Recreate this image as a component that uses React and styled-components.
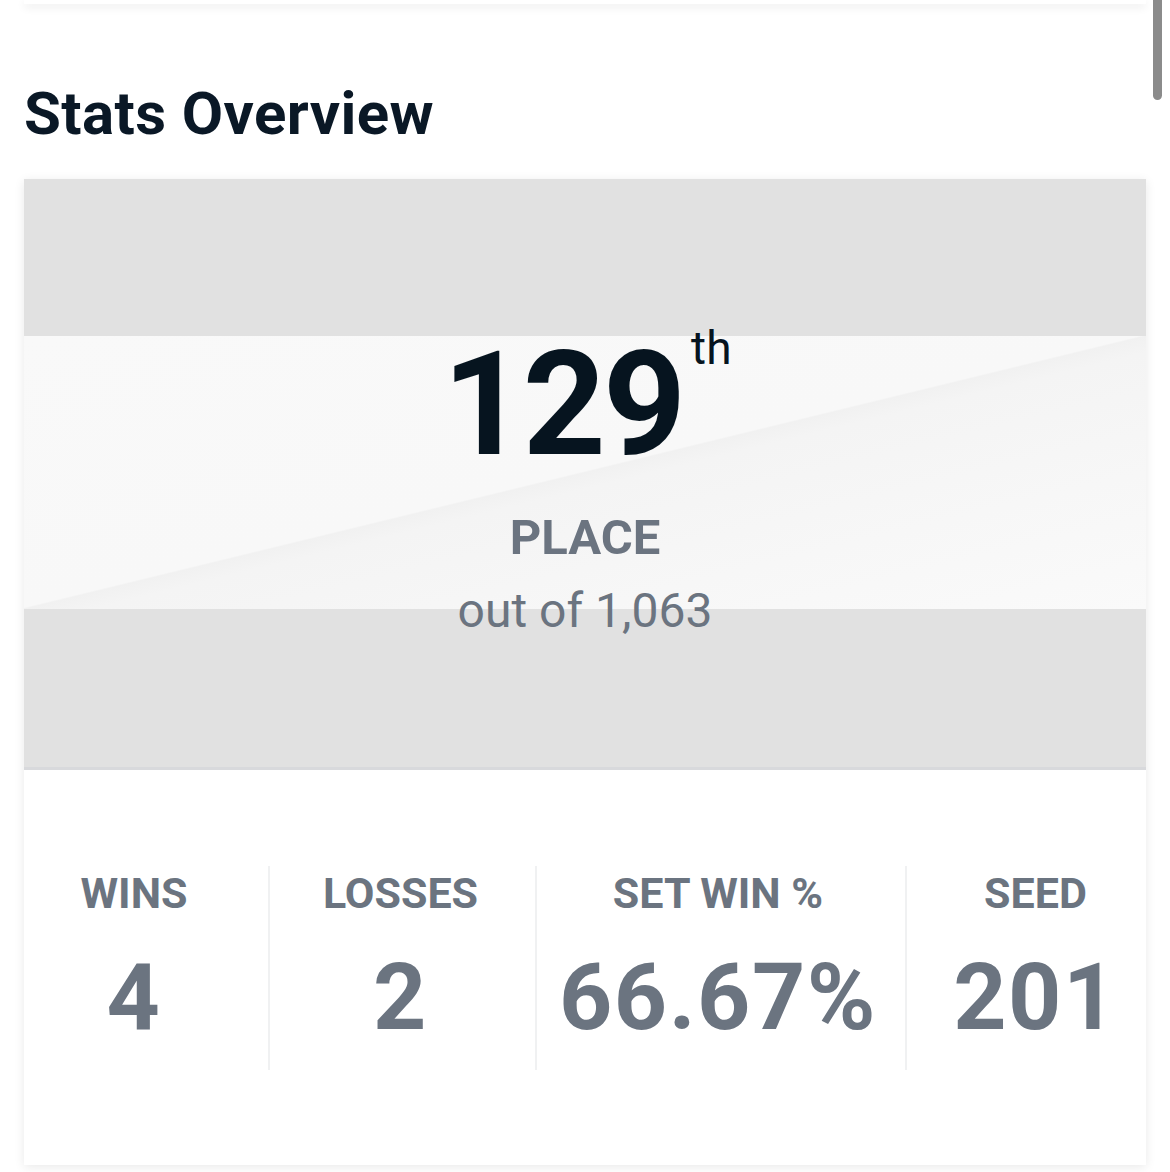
import React from 'react';
import styled, { createGlobalStyle } from 'styled-components';

const GlobalStyle = createGlobalStyle`
  html, body {
    margin: 0;
    padding: 0;
    background: #ffffff;
    overflow: hidden;
  }
  body {
    font-family: Roboto, "Liberation Sans", Arial, sans-serif;
  }
`;

const stats = [
  { label: 'WINS', value: '4', width: '244px', shift: -13 },
  { label: 'LOSSES', value: '2', width: '267px', shift: -2 },
  { label: 'SET WIN %', value: '66.67%', width: '370px', shift: -3 },
  { label: 'SEED', value: '201', width: '1fr', shift: 9 },
];

const App = () => {
  return (
    <Page>
      <GlobalStyle />
      <ScrollThumb />
      <PrevCardEdge />
      <SectionTitle>Stats Overview</SectionTitle>
      <Card>
        <Hero>
          <Rank>
            129<Suffix>th</Suffix>
          </Rank>
          <RankLabel>PLACE</RankLabel>
          <RankTotal>out of 1,063</RankTotal>
        </Hero>
        <StatsRow $columns={stats.map((s) => s.width).join(' ')}>
          {stats.map((stat, index) => (
            <StatCell key={stat.label} $divider={index > 0} $shift={stat.shift}>
              <StatLabel>{stat.label}</StatLabel>
              <StatValue>{stat.value}</StatValue>
            </StatCell>
          ))}
        </StatsRow>
      </Card>
    </Page>
  );
};

export default App;

const Page = styled.main`
  position: relative;
  padding: 0 24px;
  height: 1172px;
  box-sizing: border-box;
`;

const ScrollThumb = styled.div`
  position: absolute;
  top: -6px;
  right: 8px;
  width: 9px;
  height: 106px;
  border-radius: 5px;
  background: #8b8b8b;
`;

const PrevCardEdge = styled.div`
  height: 4px;
  background: #ffffff;
  box-shadow: 0 3px 8px rgba(0, 0, 0, 0.1);
`;

const SectionTitle = styled.h2`
  margin: 74px 0 29px;
  font-size: 60px;
  line-height: 72px;
  font-weight: 700;
  color: #0a1826;
  letter-spacing: 0.4px;
`;

const Card = styled.section`
  background: #ffffff;
  box-shadow: 0 2px 10px rgba(0, 0, 0, 0.09);
`;

const Hero = styled.div`
  height: 588px;
  display: flex;
  flex-direction: column;
  align-items: center;
  justify-content: center;
  border-bottom: 3px solid #d8d9dc;
  background:
    linear-gradient(
        to bottom right,
        #f9f9f9 0%,
        #f8f8f8 49.7%,
        #f1f1f1 50%,
        #f4f4f4 53%,
        #f7f7f7 75%,
        #fafafa 100%
      )
      0 157px / 100% 273px no-repeat,
    #e1e1e1;
`;

const Rank = styled.div`
  font-size: 145px;
  line-height: 1;
  font-weight: 700;
  letter-spacing: -3px;
  color: #06141f;
  display: flex;
  align-items: flex-start;
  margin-top: 26px;
  padding-left: 4px;
`;

const Suffix = styled.span`
  font-size: 46px;
  line-height: 1;
  font-weight: 400;
  letter-spacing: 0;
  margin-top: -7px;
  margin-left: 8px;
`;

const RankLabel = styled.div`
  margin-top: 32px;
  font-size: 49px;
  line-height: 1.2;
  font-weight: 700;
  color: #6b7480;
`;

const RankTotal = styled.div`
  margin-top: 14px;
  font-size: 48px;
  line-height: 1.2;
  font-weight: 400;
  color: #6b7480;
`;

const StatsRow = styled.div`
  display: grid;
  grid-template-columns: ${(p) => p.$columns};
  padding: 96px 0 95px;
`;

const StatCell = styled.div`
  display: flex;
  flex-direction: column;
  align-items: center;
  padding-top: 2px;
  padding-bottom: 17px;
  border-left: 2px solid ${(p) => (p.$divider ? '#f0f1f2' : 'transparent')};
  & > * {
    transform: translateX(${(p) => p.$shift}px);
  }
`;

const StatLabel = styled.div`
  font-size: 43px;
  line-height: 1.2;
  font-weight: 700;
  color: #6b7480;
`;

const StatValue = styled.div`
  margin-top: 22px;
  font-size: 93px;
  line-height: 1.2;
  font-weight: 700;
  letter-spacing: 1.5px;
  color: #6b7480;
`;
